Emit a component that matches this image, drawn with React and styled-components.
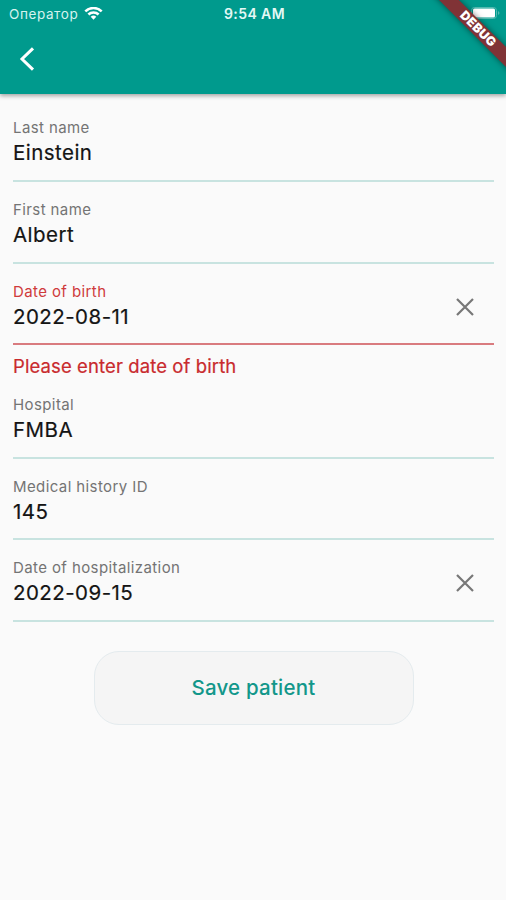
import React from 'react';
import styled, { createGlobalStyle } from 'styled-components';

const Global = createGlobalStyle`
  *, *::before, *::after { box-sizing: border-box; }
  body { margin: 0; background: #fafafa; }
`;

const Screen = styled.div`
  position: relative;
  width: 506px;
  height: 900px;
  overflow: hidden;
  background: #fafafa;
  font-family: Inter, 'Liberation Sans', sans-serif;
  color: #141414;
`;

const Header = styled.header`
  height: 94px;
  background: #009a8d;
  color: #fff;
  box-shadow: 0 2px 4px rgba(0, 0, 0, 0.34);
`;

const StatusBar = styled.div`
  display: grid;
  grid-template-columns: 1fr auto 1fr;
  align-items: center;
  height: 27px;
  padding: 0 6px 0 9px;
`;

const Carrier = styled.div`
  display: flex;
  align-items: center;
  gap: 6px;
  font-size: 13.5px;
  letter-spacing: 0.6px;
  color: #d5f3ef;
`;

const Clock = styled.div`
  font-size: 14px;
  font-weight: 600;
  letter-spacing: 0.4px;
  color: #e4f8f5;
`;

const Battery = styled.svg`
  justify-self: end;
  margin-top: -1px;
`;

const NavBar = styled.nav`
  display: flex;
  align-items: center;
  height: 64px;
  padding-left: 19px;
`;

const IconButton = styled.button`
  display: flex;
  padding: 0;
  border: 0;
  background: none;
  color: inherit;
`;

const DebugBanner = styled.div`
  position: absolute;
  top: 22px;
  left: 418px;
  width: 120px;
  height: 14px;
  transform: rotate(45deg);
  background: #803336;
  box-shadow: 0 0 6px rgba(0, 0, 0, 0.5);
  color: #fff;
  font-size: 12.5px;
  font-weight: 900;
  letter-spacing: 0.3px;
  line-height: 14px;
  text-align: center;
`;

const Form = styled.form`
  display: flex;
  flex-direction: column;
  padding: 6px 12px 0 13px;
`;

const Field = styled.div`
  display: flex;
  align-items: flex-start;
  justify-content: space-between;
  height: ${(p) => p.$height || 82}px;
  padding: 18px 20px 0 0;
  border-bottom: 2px solid ${(p) => (p.$error ? '#d97b7f' : '#c8e3e0')};
`;

const FieldText = styled.div`
  display: flex;
  flex-direction: column;
`;

const Label = styled.label`
  font-size: 15px;
  line-height: 20px;
  letter-spacing: 0.4px;
  color: ${(p) => (p.$error ? '#cf3a3c' : '#747474')};
`;

const Value = styled.span`
  font-size: 20.5px;
  line-height: 30px;
  letter-spacing: 0.45px;
  white-space: nowrap;
  -webkit-text-stroke: 0.2px currentColor;
`;

const ClearButton = styled(IconButton)`
  margin-top: 16px;
  color: #777;
`;

const ErrorText = styled.p`
  height: 32px;
  margin: 0;
  padding-top: 7px;
  font-size: 18.5px;
  line-height: 28px;
  letter-spacing: 0.1px;
  color: #c92a2d;
  -webkit-text-stroke: 0.2px currentColor;
`;

const SaveButton = styled.button`
  align-self: center;
  width: 320px;
  height: 74px;
  margin-top: 29px;
  padding: 0 0 2px;
  border: 1px solid #e4ebee;
  border-radius: 25px;
  background: #f5f5f5;
  color: #12978a;
  font-family: inherit;
  font-size: 20.5px;
  font-weight: 500;
  letter-spacing: 0.2px;
`;

const fields = [
  { label: 'Last name', value: 'Einstein' },
  { label: 'First name', value: 'Albert' },
  { label: 'Date of birth', value: '2022-08-11', clear: true, height: 81, error: 'Please enter date of birth' },
  { label: 'Hospital', value: 'FMBA' },
  { label: 'Medical history ID', value: '145', height: 81 },
  { label: 'Date of hospitalization', value: '2022-09-15', clear: true },
];

export default function App() {
  return (
    <Screen>
      <Global />
      <Header>
        <StatusBar>
          <Carrier>
            <span>Оператор</span>
            <svg width="19" height="14" viewBox="0 0 19 14" fill="none" stroke="#fff" strokeWidth="2.5">
              <path d="M1.3 4.4a11.6 11.6 0 0 1 16.4 0" />
              <path d="M4.4 7.5a7.2 7.2 0 0 1 10.2 0" />
              <path d="M6.7 9.8a4 4 0 0 1 5.6 0l-2.8 2.9z" fill="#fff" stroke="none" />
            </svg>
          </Carrier>
          <Clock>9:54 AM</Clock>
          <Battery width="29" height="12" viewBox="0 0 29 12">
            <rect x="0.5" y="0.5" width="25" height="11" rx="3" fill="none" stroke="#54b9b0" />
            <rect x="2" y="1.5" width="22" height="9" rx="1.5" fill="#fff" />
            <path d="M27 4q3 2 0 4z" fill="#54b9b0" />
          </Battery>
        </StatusBar>
        <NavBar>
          <IconButton aria-label="Back">
            <svg width="16" height="24" viewBox="0 0 16 24" fill="none" stroke="currentColor" strokeWidth="3">
              <path d="M14 1.3 3 12l11 10.7" />
            </svg>
          </IconButton>
        </NavBar>
      </Header>
      <DebugBanner>DEBUG</DebugBanner>
      <Form>
        {fields.map((f) => (
          <React.Fragment key={f.label}>
            <Field $error={f.error} $height={f.height}>
              <FieldText>
                <Label $error={f.error}>{f.label}</Label>
                <Value>{f.value}</Value>
              </FieldText>
              {f.clear && (
                <ClearButton type="button" aria-label="Clear">
                  <svg width="18" height="18" viewBox="0 0 18 18" fill="none" stroke="currentColor" strokeWidth="2.2">
                    <path d="m1 1 16 16M17 1 1 17" />
                  </svg>
                </ClearButton>
              )}
            </Field>
            {f.error && <ErrorText>{f.error}</ErrorText>}
          </React.Fragment>
        ))}
        <SaveButton type="button">Save patient</SaveButton>
      </Form>
    </Screen>
  );
}
